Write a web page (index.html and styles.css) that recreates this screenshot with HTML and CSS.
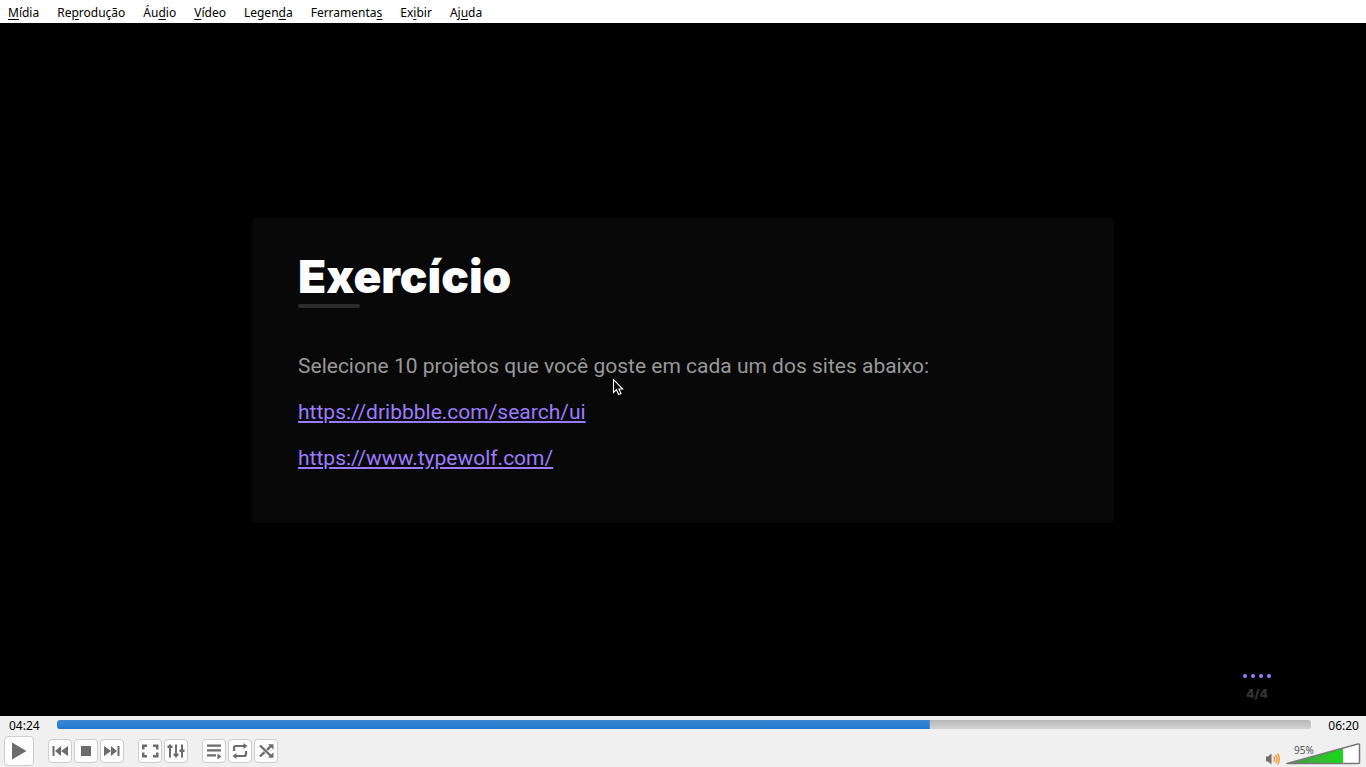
FILE: index.html
```html
<!DOCTYPE html>
<html lang="pt-BR">
<head>
<meta charset="utf-8">
<meta name="viewport" content="width=device-width, initial-scale=1">
<title>Exercício</title>
<link rel="stylesheet" href="styles.css">
</head>
<body>
<nav class="menubar">
  <button type="button"><u>M</u>ídia</button>
  <button type="button">Re<u>p</u>rodução</button>
  <button type="button">Áu<u>d</u>io</button>
  <button type="button"><u>V</u>ídeo</button>
  <button type="button">Legen<u>d</u>a</button>
  <button type="button">Ferramenta<u>s</u></button>
  <button type="button">Ex<u>i</u>bir</button>
  <button type="button">Aj<u>u</u>da</button>
</nav>

<main class="video">
  <section class="card">
    <h1>Exercício</h1>
    <p class="lead">Selecione 10 projetos que você goste em cada um dos sites abaixo:</p>
    <p><a href="https://dribbble.com/search/ui">https://dribbble.com/search/ui</a></p>
    <p><a href="https://www.typewolf.com/">https://www.typewolf.com/</a></p>
    <svg class="cursor" viewBox="0 0 12 18" aria-hidden="true"><path d="M1.5 1.5v13l3-2.8 2.2 4.8 2.3-1-2.1-4.5h3.9z" fill="#080808" stroke="#fff" stroke-width="1.1"/></svg>
  </section>
  <aside class="pager">
    <div class="dots"><i></i><i></i><i></i><i></i></div>
    <span>4/4</span>
  </aside>
</main>

<footer class="player">
  <div class="timeline">
    <time>04:24</time>
    <input class="seek" type="range" min="0" max="380" value="264" aria-label="Posição" style="--played: 69.6%">
    <time>06:20</time>
  </div>
  <div class="controls">
    <button type="button" class="tool play" aria-label="Reproduzir"><svg viewBox="1 1 28 28"><path d="M8 6.5 22.5 15 8 23.5z"/></svg></button>
    <div class="group">
      <button type="button" class="tool" aria-label="Anterior"><svg viewBox="1 1 22 22"><path d="M4.5 7h2v10h-2zM13 7v10l-6-5zM20 7v10l-7-5z"/></svg></button>
      <button type="button" class="tool" aria-label="Parar"><svg viewBox="1 1 22 22"><path d="M7 7h10v10H7z"/></svg></button>
      <button type="button" class="tool" aria-label="Próxima"><svg viewBox="1 1 22 22"><path d="M17.5 7h2v10h-2zM11 7v10l6-5zM4 7v10l7-5z"/></svg></button>
    </div>
    <div class="group">
      <button type="button" class="tool" aria-label="Tela cheia"><svg viewBox="1 1 22 22"><path d="M4 5.500h5V8H6.500v2.500H4zM15 5.500h5.500v5H18V8h-3zM4 13.500h2.500V16H9v2.500H4zM18 13.500h2.500v5H15V16h3z"/></svg></button>
      <button type="button" class="tool" aria-label="Efeitos"><svg viewBox="1 1 22 22"><path d="M5 5.500h2v13H5zM11 5.500h2v13h-2zM17 5.500h2v13h-2zM3.500 6.500h5V9h-5zM9.500 14.500h5V17h-5zM15.500 10.500h5V13h-5z"/></svg></button>
    </div>
    <div class="group">
      <button type="button" class="tool" aria-label="Lista"><svg viewBox="1 1 22 22"><path d="M5 5.500h14v2.200H5zM5 10.300h14v2.200H5zM5 15.200h9v2.200H5zM15.500 14.500l4 3-4 3z"/></svg></button>
      <button type="button" class="tool" aria-label="Repetir"><svg viewBox="1 1 22 22"><path d="M6 12V9Q6 7 8 7h8M18 12v3q0 2-2 2H8" fill="none" stroke="#6c6c6c" stroke-width="2.200"/><path d="M15.500 4l4 3-4 3zM8.500 14l-4 3 4 3z"/></svg></button>
      <button type="button" class="tool" aria-label="Aleatório"><svg viewBox="1 1 22 22"><path d="M6 6.500 17.500 17.500M6 17.500l4.500-4.300M13 10.800l4.500-4.300" fill="none" stroke="#6c6c6c" stroke-width="2.400"/><path d="M14 5.300h5.500v5.500zM19.500 13.200v5.500H14z"/></svg></button>
    </div>
    <div class="volume">
      <button type="button" class="mute" aria-label="Mudo"><svg viewBox="0 0 16 14"><path d="M1 4.500h2l3.500-3v11l-3.500-3H1z"/><path d="M8.500 4.500q2 2.500 0 5M10.500 3q3 4 0 8M12.500 1.500q3.500 5.500 0 11" fill="none" stroke="#f39a2b" stroke-width="1.400"/></svg></button>
      <label class="level">
        <svg viewBox="0 0 76 24" aria-hidden="true">
          <defs>
            <linearGradient id="green"><stop offset="0" stop-color="#469246"/><stop offset=".5" stop-color="#36b636"/><stop offset="1" stop-color="#16da16"/></linearGradient>
          </defs>
          <path d="M2 21.500 74 2v19.500z" fill="#fff"/>
          <path d="M2 21.500 58 6.300v15.200z" fill="url(#green)"/>
          <path d="M2 21.500 73 2q1.500-.3 1.500 1v17.500q0 1-1 1z" fill="none" stroke="#777" stroke-width="1.500" stroke-linejoin="round"/>
        </svg>
        <span>95%</span>
        <input type="range" min="0" max="125" value="95" aria-label="Volume">
      </label>
    </div>
  </div>
</footer>
</body>
</html>
```
FILE: styles.css
```css
* { box-sizing: border-box; }

body {
  margin: 0;
  min-height: 100vh;
  display: flex;
  flex-direction: column;
  background: #000;
  color: #000;
  font: 12px/16px "Noto Sans", sans-serif;
}

button {
  border: 0;
  padding: 0;
  background: none;
  color: inherit;
  font: inherit;
}

svg { display: block; }

.menubar {
  display: flex;
  gap: 18px;
  padding: 5px 8px 2px;
  background: #fff;
}

.menubar u { text-underline-offset: 2px; }

.video {
  position: relative;
  flex: 1;
  display: flex;
  align-items: center;
  justify-content: center;
  padding-top: 2px;
  background: #000;
}

.card {
  position: relative;
  width: 63.1%;
  padding: 31px 46px 52px;
  border-radius: 4px;
  background: #080808;
  color: #999;
  font: 21px/26px Roboto, sans-serif;
}

.card h1 {
  margin: 0;
  color: #fff;
  font: 900 46px/54px Inter, sans-serif;
}

.card h1::after {
  content: "";
  display: block;
  width: 62px;
  height: 4px;
  margin-top: 1px;
  border-radius: 2px;
  background: #2c2c2c;
}

.card p { margin: 20px 0 0; }

.card .lead { margin-top: 45px; }

.card a {
  color: #9b7bff;
  text-decoration-thickness: 2px;
  text-underline-offset: 2px;
}

.cursor {
  position: absolute;
  left: 42%;
  top: 160px;
  width: 12px;
  height: 18px;
  margin-left: -2px;
}

.pager {
  position: absolute;
  right: 95px;
  bottom: 14px;
  display: flex;
  flex-direction: column;
  align-items: center;
  gap: 8px;
  color: #333;
  font: 900 12px/16px Inter, sans-serif;
}

.dots {
  display: flex;
  gap: 4px;
}

.dots i {
  width: 4px;
  height: 4px;
  border-radius: 50%;
  background: #9b7bff;
}

.player { background: #f0f0f0; }

.timeline {
  display: flex;
  align-items: center;
  gap: 17px;
  padding: 2px 7px 0 9px;
}

.seek {
  appearance: none;
  flex: 1;
  min-width: 0;
  height: 9px;
  margin: 0 0 3px;
  border-radius: 3px;
  background:
    linear-gradient(#3a88d4, #2479cd) 0 0 / var(--played) 100% no-repeat,
    linear-gradient(#b8b8b8, #d2d2d2);
}

.seek::-webkit-slider-thumb {
  appearance: none;
  width: 1px;
  height: 1px;
}

.controls {
  display: flex;
  align-items: center;
  gap: 14px;
  padding: 2px 5px 1px 4px;
}

.group {
  display: flex;
  gap: 2px;
}

.tool {
  width: 24px;
  height: 24px;
  border: 1px solid #ccc;
  border-radius: 4px;
  background: #fdfdfd;
}

.play {
  width: 30px;
  height: 30px;
}

.tool path,
.mute path { fill: #6c6c6c; }

.tool path[fill="none"],
.mute path[fill="none"] { fill: none; }

.volume {
  display: flex;
  align-items: flex-end;
  align-self: flex-end;
  gap: 4px;
  margin-left: auto;
}

.mute svg {
  width: 16px;
  height: 14px;
}

.level {
  position: relative;
  width: 76px;
  height: 24px;
}

.level span {
  position: absolute;
  left: 9px;
  top: 0;
  color: #555;
  font-size: 10px;
}

.level input {
  position: absolute;
  inset: 0;
  width: 100%;
  margin: 0;
  opacity: 0;
}
```
